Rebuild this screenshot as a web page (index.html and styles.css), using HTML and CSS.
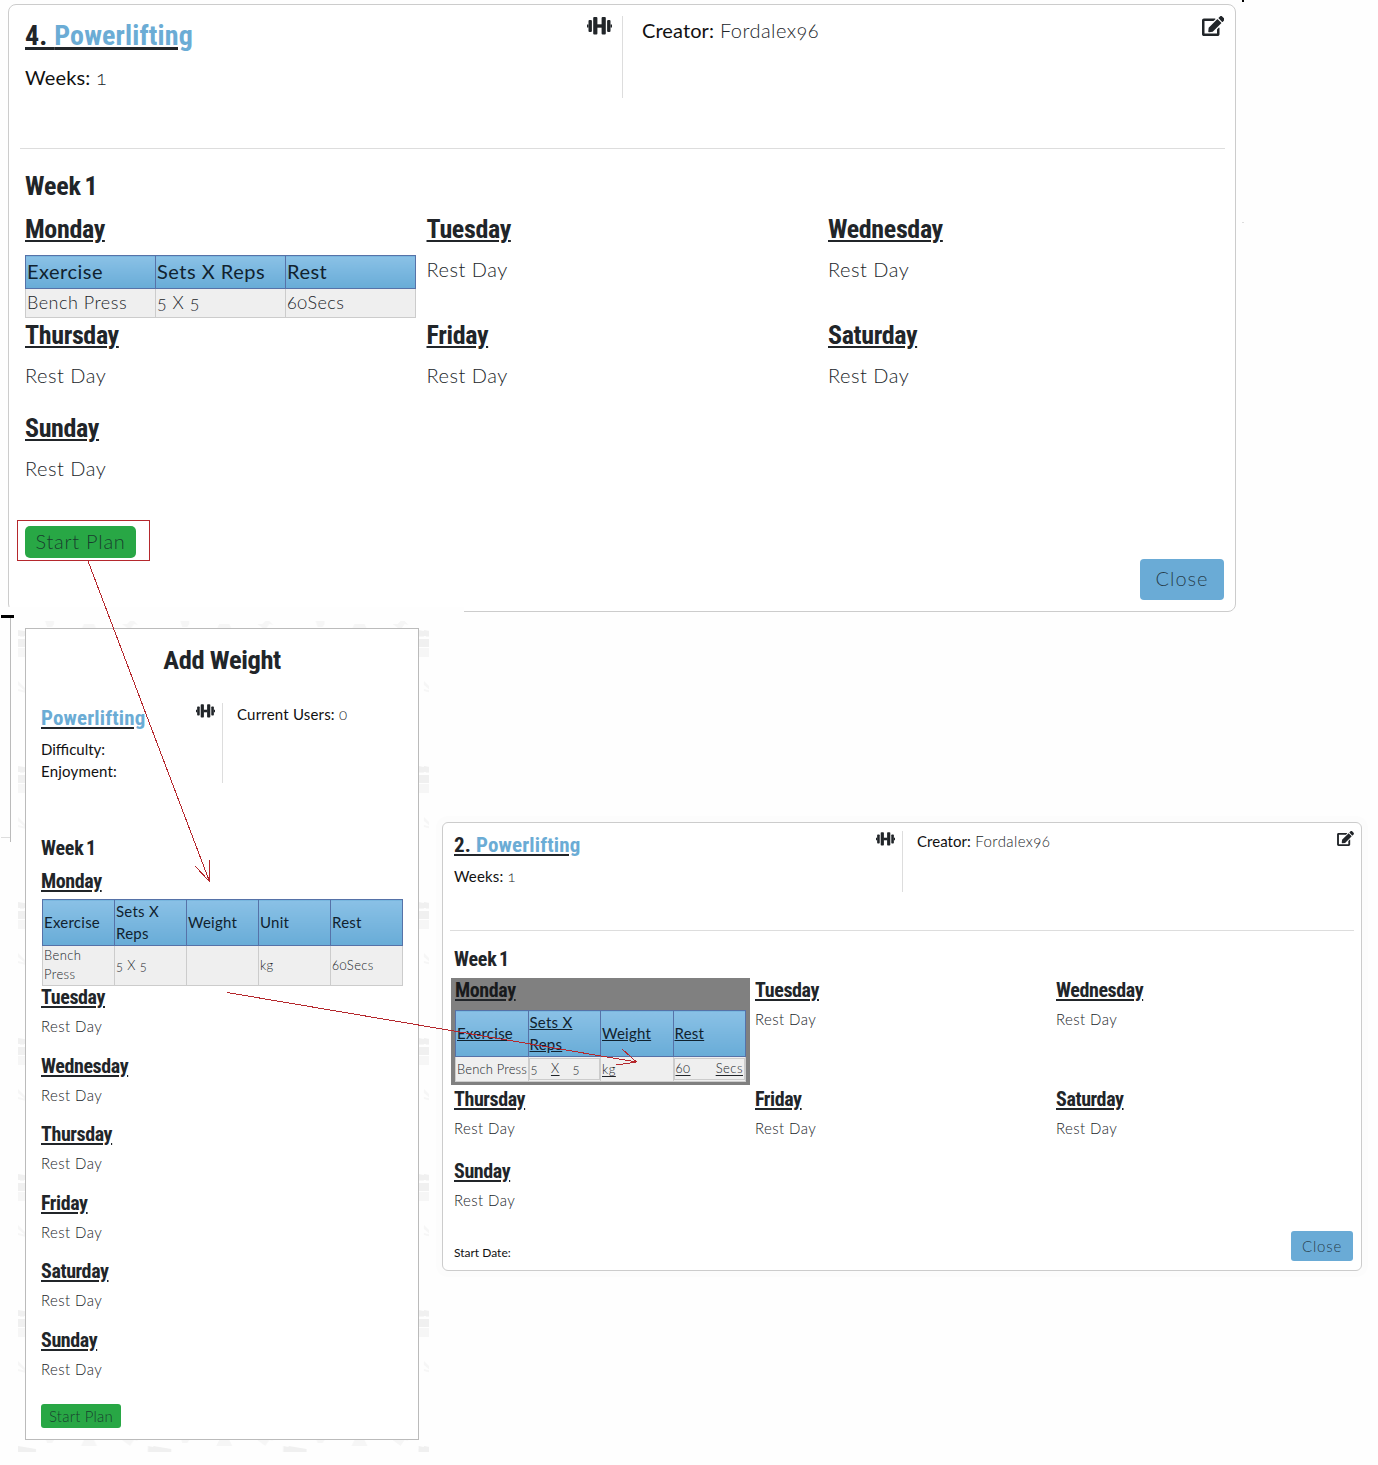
FILE: index.html
```html
<!DOCTYPE html>
<html lang="en">
<head>
<meta charset="utf-8">
<title>Workout plans</title>
<link rel="stylesheet" href="styles.css">
</head>
<body>
<svg class="defs" width="0" height="0" aria-hidden="true">
  <symbol id="dumbbell" viewBox="0 0 25 18">
    <path d="M0 7.5h1.5v3H0zM23.5 7.5H25v3h-1.500z"/>
    <rect x="1.500" y="3" width="3.400" height="12" rx="1"/><rect x="20.100" y="3" width="3.400" height="12" rx="1"/>
    <rect x="6.200" y="0" width="4.200" height="17.500" rx="1"/><rect x="14.600" y="0" width="4.200" height="17.500" rx="1"/>
    <path d="M10 7.300h5v3.400h-5z"/>
  </symbol>
  <symbol id="edit" viewBox="0 0 576 512">
    <path d="M402.600 83.200l90.200 90.200c3.800 3.800 3.800 10 0 13.800L274.400 405.600l-92.800 10.300c-12.400 1.400-22.900-9.100-21.500-21.500l10.300-92.800L388.800 83.200c3.800-3.800 10-3.800 13.800 0zm162-22.900l-48.800-48.800c-15.200-15.200-39.900-15.200-55.200 0l-35.400 35.400c-3.800 3.800-3.800 10 0 13.800l90.200 90.200c3.800 3.800 10 3.800 13.800 0l35.400-35.400c15.200-15.300 15.200-40 0-55.200zM384 346.200V448H64V128h229.800c3.200 0 6.200-1.300 8.500-3.500l40-40c7.600-7.600 2.200-20.500-8.500-20.500H48C21.500 64 0 85.500 0 112v352c0 26.500 21.500 48 48 48h352c26.500 0 48-21.500 48-48V306.200c0-10.700-12.900-16-20.500-8.500l-40 40c-2.200 2.300-3.500 5.300-3.500 8.500z"/>
  </symbol>
</svg>
<main class="canvas">

  <section class="card card-lg">
    <header class="head">
      <div class="head-left">
        <div><h2 class="title"><u>4. <span class="link">Powerlifting</span></u></h2>
        <p class="meta"><b>Weeks:</b> 1</p></div>
        <svg class="dumbbell"><use href="#dumbbell"/></svg>
      </div>
      <div class="head-right">
        <p class="meta"><b>Creator:</b> Fordalex96</p>
        <svg class="edit"><use href="#edit"/></svg>
      </div>
    </header>
    <h3 class="week">Week 1</h3>
    <div class="days">
      <div class="day"><h4>Monday</h4>
        <table class="plan">
          <tr><th>Exercise</th><th>Sets X Reps</th><th>Rest</th></tr>
          <tr><td>Bench Press</td><td>5 X 5</td><td>60Secs</td></tr>
        </table></div>
      <div class="day"><h4>Tuesday</h4><p>Rest Day</p></div>
      <div class="day"><h4>Wednesday</h4><p>Rest Day</p></div>
      <div class="day"><h4>Thursday</h4><p>Rest Day</p></div>
      <div class="day"><h4>Friday</h4><p>Rest Day</p></div>
      <div class="day"><h4>Saturday</h4><p>Rest Day</p></div>
      <div class="day"><h4>Sunday</h4><p>Rest Day</p></div>
    </div>
    <footer class="foot"><button class="start">Start Plan</button><button class="close">Close</button></footer>
  </section>

  <div class="patch"></div>
  <div class="edge-bar"></div>
  <div class="edge-panel"></div>
  <div class="tick"></div>
  <div class="tick tick-faint"></div>

  <section class="phone">
    <svg class="doodles" width="411" height="831">
      <defs>
        <pattern id="gym" width="135.300" height="136" patternUnits="userSpaceOnUse">
          <g fill="#f6f6f6">
            <path d="M27 0h9v3l-2 3h-5zM107 5l5-5h4l4 4-4-1-5 4z"/>
            <path d="M130 12h5.300v4H130zM2 12h4v4H2zM124 27h11.300v9H124zM0 27h8v9H0z"/>
            <path d="M0 60l7 7v3l-7-6zM0 68l8 2v2l-8-2z"/>
            <path d="M66 3h10l3 6H63zM104 3h12l-4 6z"/>
          </g>
          <path d="M0 18h7v8H0zM128 18h7.300v8H128zM0 9l18 3v3H0zM130 9l5.300 1v5H130z" fill="#f0f0f0"/>
        </pattern>
      </defs>
      <rect width="411" height="831" fill="url(#gym)"/>
    </svg>
    <div class="modal">
      <h1 class="modal-title">Add Weight</h1>
      <header class="head">
        <div class="head-left">
          <div><h2 class="title"><u><span class="link">Powerlifting</span></u></h2>
          <p class="meta"><b>Difficulty:</b></p><p class="meta"><b>Enjoyment:</b></p></div>
          <svg class="dumbbell"><use href="#dumbbell"/></svg>
        </div>
        <div class="head-right"><p class="meta"><b>Current Users:</b> 0</p></div>
      </header>
      <h3 class="week">Week 1</h3>
      <div class="days">
        <div class="day"><h4>Monday</h4>
          <table class="plan">
            <tr><th>Exercise</th><th>Sets X Reps</th><th>Weight</th><th>Unit</th><th>Rest</th></tr>
            <tr><td>Bench Press</td><td>5 X 5</td><td></td><td>kg</td><td>60Secs</td></tr>
          </table></div>
        <div class="day"><h4>Tuesday</h4><p>Rest Day</p></div>
        <div class="day"><h4>Wednesday</h4><p>Rest Day</p></div>
        <div class="day"><h4>Thursday</h4><p>Rest Day</p></div>
        <div class="day"><h4>Friday</h4><p>Rest Day</p></div>
        <div class="day"><h4>Saturday</h4><p>Rest Day</p></div>
        <div class="day"><h4>Sunday</h4><p>Rest Day</p></div>
      </div>
      <button class="start">Start Plan</button>
    </div>
  </section>

  <section class="card card-sm">
    <header class="head">
      <div class="head-left">
        <div><h2 class="title"><u>2. <span class="link">Powerlifting</span></u></h2>
        <p class="meta"><b>Weeks:</b> 1</p></div>
        <svg class="dumbbell"><use href="#dumbbell"/></svg>
      </div>
      <div class="head-right">
        <p class="meta"><b>Creator:</b> Fordalex96</p>
        <svg class="edit"><use href="#edit"/></svg>
      </div>
    </header>
    <h3 class="week">Week 1</h3>
    <div class="days">
      <div class="day active"><h4>Monday</h4>
        <table class="plan">
          <tr><th>Exercise</th><th>Sets X Reps</th><th>Weight</th><th>Rest</th></tr>
          <tr><td>Bench Press</td>
            <td class="slot"><div class="field"><span>5</span><u>X</u><span>5</span></div></td>
            <td><u>kg</u></td>
            <td class="slot"><div class="field wide"><u>60</u><u>Secs</u></div></td></tr>
        </table></div>
      <div class="day"><h4>Tuesday</h4><p>Rest Day</p></div>
      <div class="day"><h4>Wednesday</h4><p>Rest Day</p></div>
      <div class="day"><h4>Thursday</h4><p>Rest Day</p></div>
      <div class="day"><h4>Friday</h4><p>Rest Day</p></div>
      <div class="day"><h4>Saturday</h4><p>Rest Day</p></div>
      <div class="day"><h4>Sunday</h4><p>Rest Day</p></div>
    </div>
    <footer class="foot"><span class="date">Start Date:</span><button class="close">Close</button></footer>
  </section>

  <svg class="arrows" width="1378" height="1465" fill="none" stroke="#b5282d" shape-rendering="crispEdges">
    <rect x="17.500" y="520.500" width="132" height="40"/>
    <path d="M88 561L209.500 881.500M195 866l14.500 15.500V860"/>
    <path d="M227 992.500L636.500 1062M622 1049l14.500 13L616 1065"/>
  </svg>
</main>
</body>
</html>
```
FILE: styles.css
```css
* { box-sizing: border-box; }
body { margin: 0; background: #fefefe; color: #212529; font-family: Lato, "Open Sans", sans-serif; font-weight: 300; font-variant-numeric: oldstyle-nums; }
h1, h2, h3, h4, p { margin: 0; white-space: nowrap; }
b { font-weight: 400; color: #111; }
button { border: 0; padding: 0; font: inherit; color: rgba(20, 30, 40, .8); }
.defs { position: absolute; }
.canvas { position: relative; width: 1378px; height: 1465px; overflow: hidden; }

h1, h2, h3, h4 { font-family: "Liberation Sans Narrow", Roboto, sans-serif; font-stretch: 75%; font-weight: 700; font-variant-numeric: normal; }
h4, .title u { text-decoration: underline; text-decoration-color: #212529; text-decoration-thickness: 2px; text-underline-offset: 2px; }
.link { color: #6bacd5; }
svg { fill: #212529; flex: none; display: block; }

/* windows on the canvas */
.card { position: absolute; border: 1px solid #ccc; background: #fff; display: flex; flex-direction: column; }
.card-lg { left: 8px; top: 4px; width: 1228px; height: 608px; border-radius: 8px; padding: 0 10px 0 11px; font-size: 20px; }
.card-sm { left: 442px; top: 822px; width: 920px; height: 449px; border-radius: 6px; padding: 0 7px; font-size: 15px; box-shadow: 0 0 0 6px #fcfcfc; }
.phone { position: absolute; left: 18px; top: 621px; width: 411px; height: 831px; padding: 7px 10px 11px 7px; font-size: 15px; }
.doodles { position: absolute; left: 0; top: 0; }
.modal { position: relative; width: 394px; height: 812px; background: #fff; border: 1px solid #bbb; padding: 0 15px; }

/* header */
.head, .head-left, .head-right { display: flex; }
.head-left, .head-right { justify-content: space-between; }
.card-lg .head { height: 144px; padding: 11px 0 0 5px; border-bottom: 1px solid #ddd; }
.card-lg .head-left { width: 598px; height: 82px; border-right: 1px solid #ddd; padding-right: 10px; }
.card-lg .head-right { flex: 1; padding: 0 1px 0 19px; }
.card-lg .title { font-size: 28px; line-height: 40px; }
.card-lg .title u { text-decoration-thickness: 3px; }
.meta { letter-spacing: .2px; }
.card-lg .meta { line-height: 28px; letter-spacing: .45px; }
.card-lg .head-right b { letter-spacing: .1px; }
.card-lg .head-left .meta { margin-top: 7px; letter-spacing: .15px; }
.card-lg .dumbbell { width: 25px; height: 18px; margin-top: 1px; }
.card-lg .edit { width: 22.500px; height: 20px; }

.card-sm .head { height: 108px; padding: 8px 0 0 4px; border-bottom: 1px solid #ddd; }
.card-sm .head-left { width: 449px; height: 61px; border-right: 1px solid #ddd; padding-right: 7px; }
.card-sm .head-right { flex: 1; padding-left: 14px; }
.title { font-size: 21px; line-height: 28px; letter-spacing: .15px; }
.card-sm .meta { line-height: 20px; letter-spacing: .4px; }
.card-sm .head-right b { letter-spacing: .05px; }
.card-sm .head-left .meta { margin-top: 7px; letter-spacing: .15px; }
.dumbbell { width: 19px; height: 14px; margin-top: 1px; }
.card-sm .edit { width: 17px; height: 15px; }

.modal-title { font-size: 26.500px; line-height: 36px; padding-top: 13px; text-align: center; letter-spacing: -.4px; }
.modal .head { height: 120px; margin-top: 25px; }
.modal .head-left { width: 182px; height: 80px; border-right: 1px solid #ddd; padding-right: 7px; }
.modal .head-right { padding: 0 0 0 14px; }
.modal .meta { line-height: 22px; }
.modal .title { padding-top: 1px; }
.modal .head-left .meta:nth-child(2) { margin-top: 6px; letter-spacing: 0; }

/* weeks and days */
.week, .day h4 { font-size: 20px; line-height: 26px; letter-spacing: -.4px; }
.week { letter-spacing: -.2px; word-spacing: -2px; }
.day p { line-height: 22px; margin-top: 5px; letter-spacing: .4px; }
.card-lg .week { font-size: 26px; line-height: 36px; margin: 19px 0 7px 5px; }
.card-lg .day h4 { font-size: 26px; line-height: 36px; letter-spacing: -.35px; }
.card-lg .day p { line-height: 30px; margin-top: 7px; letter-spacing: .5px; }
.card-lg .days { display: grid; grid-template: 106px 93px 93px / 401.500px 401.500px 1fr; padding-left: 5px; }
.card-sm .week { margin: 15px 0 5px 4px; }
.card-sm .days { display: grid; grid-template: 109px 72px 72px / 301px 301px 1fr; padding-left: 4px; }
.modal .week { margin-top: 12px; }
.modal .days { margin-top: 7px; }
.modal .day { height: 68.500px; }
.modal .day:first-child { height: 116px; }

/* exercise tables */
.plan { border-collapse: collapse; table-layout: fixed; letter-spacing: .25px; }
.plan th { background: linear-gradient(#8ac1e6, #68acd7); border: 1px solid #5672a8; font-weight: 400; text-align: left; color: #10222f; padding: 0 1px; }
.plan td { background: #efefef; border: 1px solid #ccc; padding: 0 1px; }
.card-lg .plan { width: 391px; margin-top: 8px; letter-spacing: .5px; line-height: 22px; }
.card-lg .plan th, .card-lg .plan td { padding-bottom: 3px; }
.card-lg .plan tr:first-child { height: 33px; }
.card-lg .plan tr + tr { height: 29px; font-size: 18px; }
.modal .plan { width: 361px; margin: 5px 0 0 1px; line-height: 22px; }
.modal .plan th, .modal .plan td { padding: 0 3px 1px 1px; }
.modal .plan tr:first-child { height: 45px; }
.modal .plan tr + tr { height: 39px; font-size: 13px; line-height: 19px; letter-spacing: .4px; }
.active { width: 299px; height: 107px; margin: 1px 0 0 -3px; padding-left: 4px; background: #808080; }
.card-sm .active h4 { line-height: 25px; color: #181a1c; }
.active .plan { width: 291px; margin-top: 7px; line-height: 22px; }
.active .plan th { text-decoration: underline; line-height: 22px; padding-bottom: 1px; }
.active .plan tr + tr { height: 25px; font-size: 13px; line-height: 18px; letter-spacing: .5px; }
.active .plan td { white-space: nowrap; overflow: hidden; }
.active .plan td:first-child { letter-spacing: .15px; }
.active u { text-underline-offset: 2px; }
.active .plan .slot { padding: 0; }
.field { display: flex; height: 22px; border: 1px solid #ccc; padding: 0 19px 0 1px; justify-content: space-between; }
.field.wide { padding: 0 1px; }

/* actions */
.foot { display: flex; justify-content: space-between; align-items: flex-start; margin-top: auto; }
.start { background: #28a745; }
.close { background: #6aabd6; }
.card-lg .foot { height: 85px; padding: 0 1px 0 5px; }
.card-lg .start { width: 111px; height: 32px; border-radius: 5px; letter-spacing: .75px; padding-bottom: 2px; }
.card-lg .close { width: 84px; height: 41px; margin-top: 33px; border-radius: 4px; letter-spacing: 1px; padding-bottom: 3px; }
.card-sm .foot { height: 39px; padding: 0 1px 0 4px; }
.card-sm .close { width: 62px; height: 30px; border-radius: 3px; letter-spacing: .8px; padding-bottom: 1px; }
.date { font-size: 12px; font-weight: 400; color: #111; line-height: 16px; margin-top: 14px; }
.modal .start { display: block; width: 80px; height: 24px; border-radius: 3px; margin-top: 9px; letter-spacing: .2px; }

/* leftovers of the neighbouring page around the windows */
.patch { position: absolute; left: 0; top: 607px; width: 464px; height: 14px; background: #fefefe; }
.edge-bar { position: absolute; left: 1px; top: 615px; width: 13px; height: 3px; background: #000; }
.edge-panel { position: absolute; left: 1px; top: 618px; width: 10px; height: 224px; border-right: 1px solid #bbb; background: linear-gradient(#ddd, #ddd) 0 219px / 9px 1px no-repeat; }
.tick { position: absolute; left: 1242px; top: 0; width: 2px; height: 2px; background: #000; }
.tick-faint { top: 222px; height: 1px; background: #ddd; }
.arrows { position: absolute; left: 0; top: 0; fill: none; }
```
